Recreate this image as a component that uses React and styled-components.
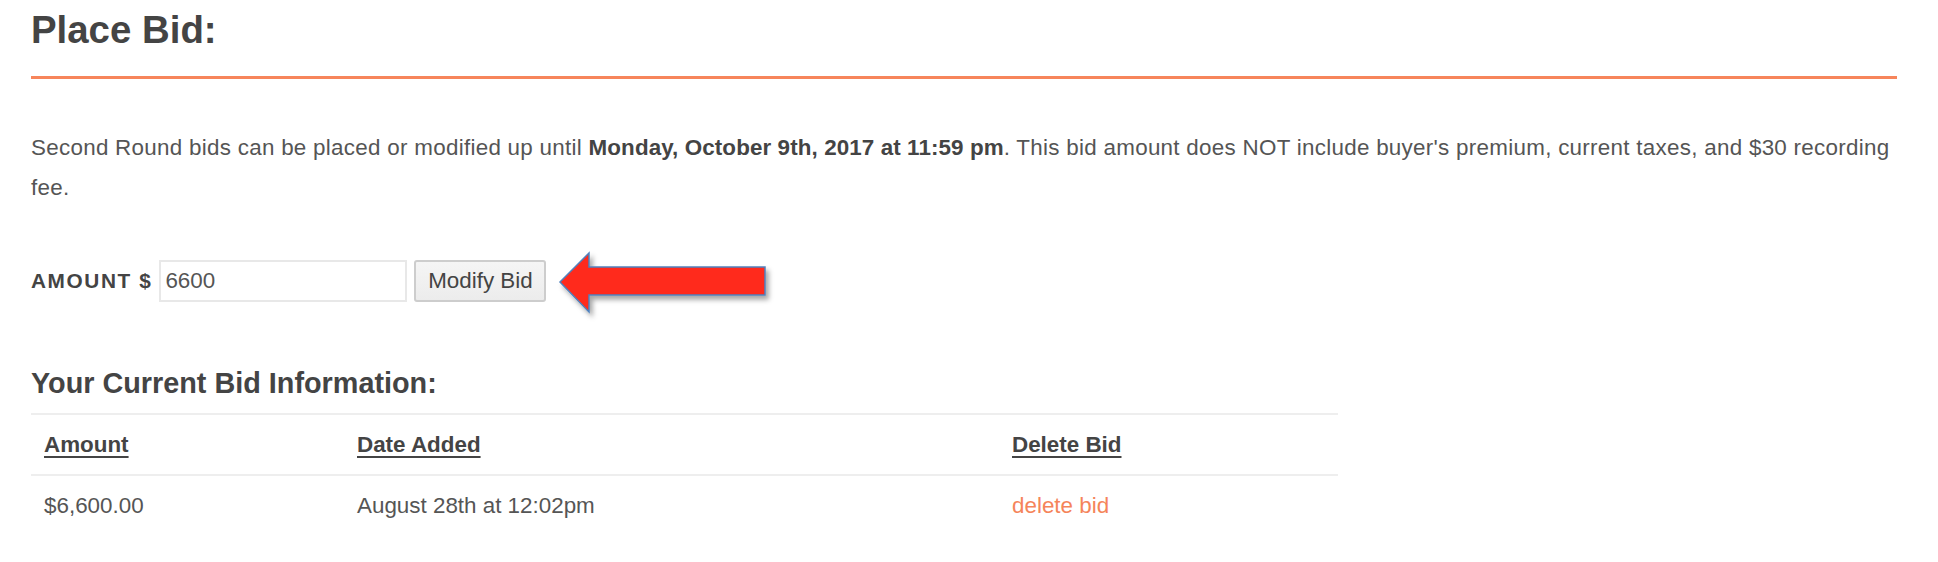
import React, { useState } from 'react';
import styled, { createGlobalStyle } from 'styled-components';

const GlobalStyle = createGlobalStyle`
  html, body {
    margin: 0;
    padding: 0;
    background: #fff;
  }
  body {
    font-family: "Liberation Sans", Arial, Helvetica, sans-serif;
    color: #555;
  }
`;

const Page = styled.div`
  width: 1866px;
  padding: 0 41px 0 31px;
`;

const Title = styled.h1`
  margin: 7px 0 0;
  padding-bottom: 23px;
  border-bottom: 3px solid #f7855b;
  font-size: 38.4px;
  line-height: 46px;
  font-weight: bold;
  color: #444;
`;

const Notice = styled.p`
  margin: 49px 0 0;
  font-size: 22.4px;
  line-height: 40px;
  letter-spacing: 0.28px;
  color: #555;

  strong {
    color: #444;
    letter-spacing: 0.1px;
  }
`;

const BidForm = styled.form`
  display: flex;
  align-items: center;
  margin-top: 52px;
  height: 42px;
`;

const Label = styled.label`
  font-size: 20.8px;
  font-weight: bold;
  letter-spacing: 1.6px;
  color: #444;
  margin-right: 7px;
`;

const AmountInput = styled.input`
  box-sizing: border-box;
  width: 248px;
  height: 42px;
  padding: 0 4px;
  border: 2px solid #e8e8e8;
  font-family: inherit;
  font-size: 22.4px;
  color: #555;
  outline: none;
`;

const SubmitButton = styled.button`
  box-sizing: border-box;
  width: 132px;
  height: 42px;
  margin-left: 7px;
  border: 2px solid #cdcdcd;
  border-radius: 3px;
  background: linear-gradient(#f5f5f5, #ececec);
  font-family: inherit;
  font-size: 22.4px;
  color: #444;
  cursor: pointer;
`;

const Arrow = styled.svg`
  display: block;
  margin-left: 7px;
  overflow: visible;
`;

const SubTitle = styled.h2`
  margin: 64px 0 0;
  font-size: 28.8px;
  line-height: 34.5px;
  font-weight: bold;
  color: #444;
`;

const BidTable = styled.table`
  width: 1307px;
  margin-top: 12px;
  border-collapse: collapse;
  font-size: 22.4px;
  line-height: 35px;
`;

const HeadCell = styled.th`
  width: ${(p) => p.$width}px;
  padding: 12px 13px;
  border-top: 2px solid #eee;
  text-align: left;
  font-weight: bold;
  color: #444;
  text-decoration: underline;
  text-decoration-thickness: 2px;
  text-underline-offset: 4px;
`;

const Cell = styled.td`
  padding: 12px 13px;
  border-top: 2px solid #eee;
  color: #555;
`;

const DeleteLink = styled.a`
  color: #f5845a;
  text-decoration: none;
  cursor: pointer;
`;

const RedArrow = () => (
  <Arrow width="222" height="70" viewBox="0 0 222 70">
    <defs>
      <filter id="arrowShadow" x="-10%" y="-20%" width="130%" height="160%">
        <feDropShadow dx="3" dy="4" stdDeviation="2.5" floodColor="#000" floodOpacity="0.35" />
      </filter>
    </defs>
    <polygon
      points="7,36 36,7 36,21 212,21 212,49 36,49 36,66"
      fill="#ff2a1a"
      stroke="#4f81bd"
      strokeWidth="1.5"
      strokeLinejoin="miter"
      filter="url(#arrowShadow)"
    />
  </Arrow>
);

const App = () => {
  const [amount, setAmount] = useState('6600');
  const [bids, setBids] = useState([
    { amount: '$6,600.00', date: 'August 28th at 12:02pm' },
  ]);

  return (
    <Page>
      <GlobalStyle />
      <Title>Place Bid:</Title>
      <Notice>
        Second Round bids can be placed or modified up until{' '}
        <strong>Monday, October 9th, 2017 at 11:59 pm</strong>. This bid amount does NOT include
        buyer's premium, current taxes, and $30 recording fee.
      </Notice>
      <BidForm onSubmit={(e) => e.preventDefault()}>
        <Label htmlFor="amount">AMOUNT $</Label>
        <AmountInput id="amount" value={amount} onChange={(e) => setAmount(e.target.value)} />
        <SubmitButton type="submit">Modify Bid</SubmitButton>
        <RedArrow />
      </BidForm>
      <SubTitle>Your Current Bid Information:</SubTitle>
      <BidTable>
        <thead>
          <tr>
            <HeadCell $width={287}>Amount</HeadCell>
            <HeadCell $width={629}>Date Added</HeadCell>
            <HeadCell>Delete Bid</HeadCell>
          </tr>
        </thead>
        <tbody>
          {bids.map((bid, i) => (
            <tr key={i}>
              <Cell>{bid.amount}</Cell>
              <Cell>{bid.date}</Cell>
              <Cell>
                <DeleteLink onClick={() => setBids(bids.filter((_, j) => j !== i))}>delete bid</DeleteLink>
              </Cell>
            </tr>
          ))}
        </tbody>
      </BidTable>
    </Page>
  );
};

export default App;
